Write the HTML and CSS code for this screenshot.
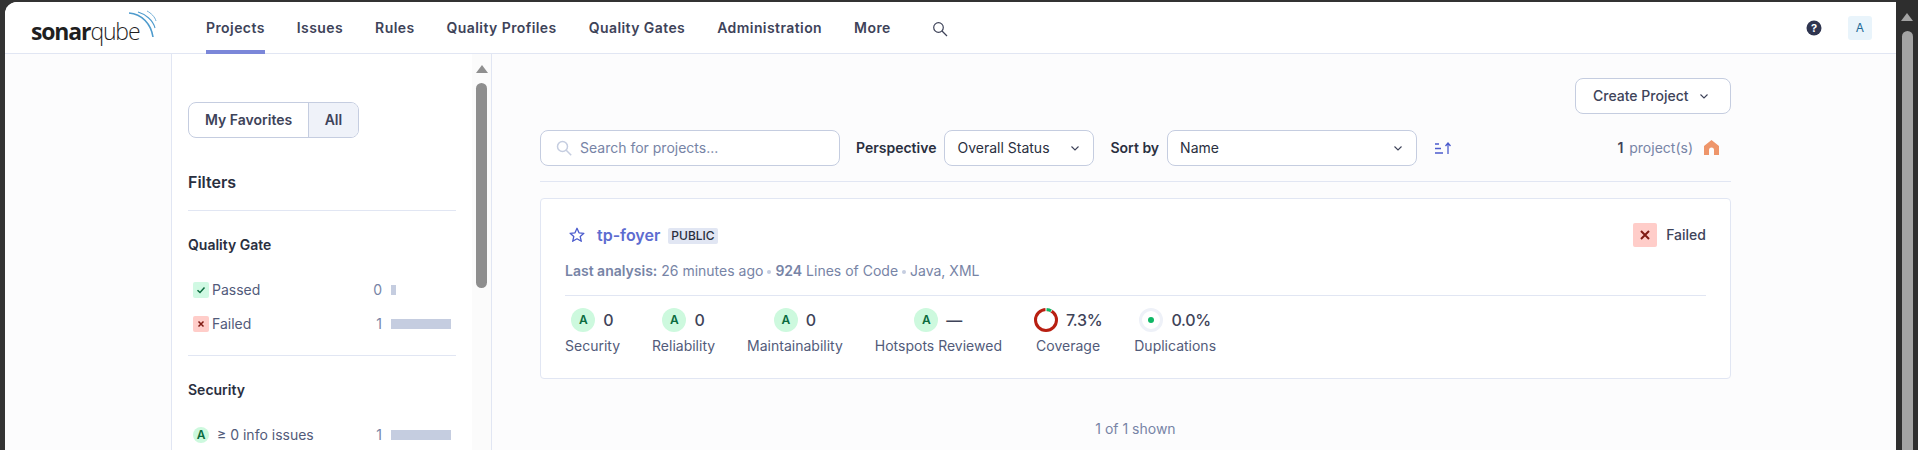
FILE: index.html
```html
<!DOCTYPE html>
<html lang="en">
<head>
<meta charset="utf-8">
<title>Projects - SonarQube</title>
<link rel="stylesheet" href="styles.css">
</head>
<body>
<div class="window">
  <header class="topbar">
    <a class="logo">
      <span class="logo-text"><b>sonar</b><span class="logo-light">qube</span></span>
      <svg class="logo-arcs" width="30" height="30" viewBox="0 0 30 30" fill="none" stroke="#4e9bcd">
        <path d="M1 3C14 4 23 14 25 27" stroke-width="1.600"/>
        <path d="M10 2C17 4 25 10 27 18" stroke-width="1.100"/>
        <path d="M19 1C23 3 27 7 28 11" stroke-width=".8"/>
      </svg>
    </a>
    <nav class="nav">
      <a class="nav-item active">Projects</a>
      <a class="nav-item">Issues</a>
      <a class="nav-item">Rules</a>
      <a class="nav-item">Quality Profiles</a>
      <a class="nav-item">Quality Gates</a>
      <a class="nav-item">Administration</a>
      <a class="nav-item">More</a>
      <svg class="nav-search" width="16" height="16" viewBox="0 0 16 16" fill="none" stroke="#3e4359" stroke-width="1.200"><circle cx="6.500" cy="6.500" r="4.800"/><path d="M10 10l5 5"/></svg>
    </nav>
    <div class="top-right">
      <svg width="16" height="16" viewBox="0 0 16 16"><circle cx="8" cy="8" r="7.500" fill="#2f3550"/><text class="help-mark" x="8" y="11.500" text-anchor="middle">?</text></svg>
      <span class="avatar">A</span>
    </div>
  </header>

  <div class="body-row">
    <aside class="sidebar">
      <div class="side-content">
        <div class="toggle">
          <span class="toggle-item">My Favorites</span>
          <span class="toggle-item selected">All</span>
        </div>
        <h2 class="filters-title">Filters</h2>
        <section class="facet">
          <h3 class="facet-title">Quality Gate</h3>
          <div class="facet-row">
            <span class="qg-mini pass"><svg width="10" height="10" viewBox="0 0 10 10" fill="none" stroke="#0a6b3e" stroke-width="1.500"><path d="M1.500 5.200l2.500 2.300 4.500-5"/></svg></span>
            <span class="facet-label">Passed</span>
            <span class="facet-count">0</span>
            <span class="facet-bar"><i class="bar-fill" style="width:5px"></i></span>
          </div>
          <div class="facet-row">
            <span class="qg-mini fail"><svg width="10" height="10" viewBox="0 0 10 10" fill="none" stroke="#801b14" stroke-width="1.500"><path d="M2.500 2.500l5 5M7.500 2.500l-5 5"/></svg></span>
            <span class="facet-label">Failed</span>
            <span class="facet-count">1</span>
            <span class="facet-bar"><i class="bar-fill" style="width:60px"></i></span>
          </div>
        </section>
        <section class="facet">
          <h3 class="facet-title">Security</h3>
          <div class="facet-row">
            <span class="rating-mini">A</span>
            <span class="facet-label spaced">≥ 0 info issues</span>
            <span class="facet-count">1</span>
            <span class="facet-bar"><i class="bar-fill" style="width:60px"></i></span>
          </div>
        </section>
      </div>
      <div class="side-scroll">
        <span class="arrow-up"></span>
        <span class="side-thumb"></span>
      </div>
    </aside>

    <main class="main">
      <div class="actions">
        <button class="btn">Create Project
          <svg width="12" height="12" viewBox="0 0 12 12" fill="none" stroke="#3e4359" stroke-width="1.100"><path d="M2.500 4.500L6 8l3.500-3.500"/></svg>
        </button>
      </div>
      <div class="filters">
        <label class="search">
          <svg width="16" height="16" viewBox="0 0 16 16" fill="none" stroke="#c5cde0" stroke-width="1.500"><circle cx="6.500" cy="6.500" r="5"/><path d="M10.200 10.200l5 5"/></svg>
          <span class="placeholder">Search for projects...</span>
        </label>
        <span class="field-label">Perspective</span>
        <span class="select perspective">Overall Status
          <svg width="12" height="12" viewBox="0 0 12 12" fill="none" stroke="#3e4359" stroke-width="1.100"><path d="M2.500 4.500L6 8l3.500-3.500"/></svg>
        </span>
        <span class="field-label sort-label">Sort by</span>
        <span class="select sort">Name
          <svg width="12" height="12" viewBox="0 0 12 12" fill="none" stroke="#3e4359" stroke-width="1.100"><path d="M2.500 4.500L6 8l3.500-3.500"/></svg>
        </span>
        <svg class="sort-icon" width="16" height="12" viewBox="0 0 16 12" fill="none" stroke="#4b5bcd" stroke-width="1.300"><path d="M0 2h4M0 6.500h6M0 11h8M13 12V1.500M10.500 4L13 1l2.500 3"/></svg>
        <span class="count"><b>1</b> project(s)</span>
        <svg class="home" width="15" height="15" viewBox="0 0 15 15"><path fill="#ee956a" d="M7.500 0L15 6v8.500a.5.500 0 0 1-.5.500H10V10a2.500 2.500 0 0 0-5 0v5H.5a.5.500 0 0 1-.5-.5V6z"/></svg>
      </div>
      <div class="card">
        <div class="card-head">
          <svg class="star" width="16" height="16" viewBox="0 0 16 16" fill="none" stroke="#4b5bcd" stroke-width="1.300" stroke-linejoin="round"><path d="M8 1.300l2 4.500 4.900.5-3.700 3.200 1.100 4.800L8 11.800l-4.300 2.500 1.100-4.800L1.100 6.300 6 5.800z"/></svg>
          <a class="project-name">tp-foyer</a>
          <span class="badge">PUBLIC</span>
          <span class="status-icon"><svg width="14" height="14" viewBox="0 0 14 14" fill="none" stroke="#801b14" stroke-width="2"><path d="M3 3l8 8M11 3l-8 8"/></svg></span>
          <span class="status-text">Failed</span>
        </div>
        <div class="meta">
          <b>Last analysis:</b> 26 minutes ago<i class="dot"></i><b>924</b> Lines of Code<i class="dot"></i>Java, XML
        </div>
        <div class="measures">
          <div class="measure">
            <div class="value"><span class="rating">A</span><span class="num">0</span></div>
            <span class="measure-label">Security</span>
          </div>
          <div class="measure">
            <div class="value"><span class="rating">A</span><span class="num">0</span></div>
            <span class="measure-label">Reliability</span>
          </div>
          <div class="measure">
            <div class="value"><span class="rating">A</span><span class="num">0</span></div>
            <span class="measure-label">Maintainability</span>
          </div>
          <div class="measure">
            <div class="value"><span class="rating">A</span><span class="num">—</span></div>
            <span class="measure-label">Hotspots Reviewed</span>
          </div>
          <div class="measure">
            <div class="value">
              <svg width="24" height="24" viewBox="0 0 24 24" fill="none" stroke-width="3"><circle cx="12" cy="12" r="10.500" stroke="#b81f11"/><path d="M11.450 1.510A10.500 10.500 0 0 1 17.720 3.190" stroke="#fff" stroke-width="3.400"/><path d="M12.550 1.510A10.500 10.500 0 0 1 17.090 2.820" stroke="#0fb765"/></svg>
              <span class="num pct">7.3%</span>
            </div>
            <span class="measure-label">Coverage</span>
          </div>
          <div class="measure">
            <div class="value">
              <svg width="24" height="24" viewBox="0 0 24 24" fill="none"><circle cx="12" cy="12" r="10.500" stroke="#eef1f8" stroke-width="3"/><circle cx="12" cy="12" r="3" fill="#0fb765"/></svg>
              <span class="num pct">0.0%</span>
            </div>
            <span class="measure-label">Duplications</span>
          </div>
        </div>
      </div>
      <div class="shown">1 of 1 shown</div>
    </main>
  </div>
</div>
<div class="page-scroll">
  <span class="arrow-up light"></span>
  <span class="page-thumb"></span>
</div>
</body>
</html>
```

FILE: styles.css
```css
* { box-sizing: border-box; }
html, body { margin: 0; height: 450px; overflow: hidden; }
body {
  display: flex;
  background: #333;
  font-family: Inter, "Noto Sans", sans-serif;
  font-size: 14px;
  line-height: 20px;
  color: #3e4359;
}
h2, h3 { margin: 0; }
.window {
  width: 1891px;
  margin: 2px 0 0 5px;
  height: 448px;
  background: #fcfcfd;
  border-radius: 12px 0 0 0;
  overflow: hidden;
  display: flex;
  flex-direction: column;
}
.topbar {
  height: 52px;
  flex: none;
  display: flex;
  align-items: center;
  background: #fff;
  border-bottom: 1px solid #e1e6f3;
  padding-left: 26px;
}
.logo { display: flex; width: 175px; height: 52px; align-items: flex-start; }
.logo-text {
  width: 107px;
  margin-top: 13px;
  font-family: "Open Sans", sans-serif;
  font-size: 23px;
  line-height: 32px;
  letter-spacing: -1.15px;
  color: #1f1f1f;
  white-space: nowrap;
}
.logo-text b { font-weight: 700; }
.logo-light { font-weight: 300; }
.logo-arcs { margin: 8px 0 0 -10px; flex: none; }
.nav { display: flex; align-items: center; gap: 32px; height: 52px; }
.nav-item {
  height: 52px;
  padding-top: 16px;
  font-weight: 600;
  letter-spacing: .42px;
  color: #3e4359;
  white-space: nowrap;
}
.nav-item.active { border-bottom: 4px solid #7b87d9; }
.nav-search { margin: 2px 0 0 9px; }
.top-right { margin-left: auto; display: flex; align-items: center; gap: 26px; padding-right: 24px; }
.help-mark { font-size: 11px; font-weight: 700; fill: #fff; }
.avatar {
  width: 24px; height: 24px;
  display: flex; align-items: center; justify-content: center;
  border-radius: 3px;
  background: #e9f4fb;
  color: #236a97;
  font-size: 12px;
}

.body-row { flex: 1; display: flex; min-height: 0; padding-left: 166px; }
.sidebar {
  width: 321px;
  flex: none;
  display: flex;
  background: #fff;
  border-left: 1px solid #e1e6f3;
  border-right: 1px solid #e1e6f3;
}
.side-content { width: 300px; flex: none; padding: 48px 0 0 16px; }
.side-scroll {
  width: 19px;
  flex: none;
  display: flex;
  flex-direction: column;
  align-items: center;
  background: #fbfbfb;
  padding-top: 11px;
}
.arrow-up {
  width: 0; height: 0;
  border-left: 6px solid transparent;
  border-right: 6px solid transparent;
  border-bottom: 8px solid #8f8f8f;
}
.arrow-up.light { border-bottom-color: #a3a3a3; }
.side-thumb { width: 11px; height: 205px; margin-top: 10px; background: #8e8e8e; border-radius: 6px; }

.toggle {
  display: inline-flex;
  height: 36px;
  border: 1px solid #c5cde0;
  border-radius: 8px;
  overflow: hidden;
  font-weight: 600;
}
.toggle-item { padding: 7px 16px; }
.toggle-item.selected { padding: 7px 15.5px; background: #eff2f9; border-left: 1px solid #c5cde0; }
.filters-title {
  margin-top: 32px;
  height: 41px;
  width: 268px;
  font-size: 16px;
  line-height: 24px;
  font-weight: 600;
  color: #2a2f40;
  border-bottom: 1px solid #e1e6f3;
}
.facet { width: 268px; padding-top: 24px; height: 145px; border-bottom: 1px solid #e1e6f3; }
.facet + .facet { border-bottom: 0; }
.facet-title { font-size: 14px; line-height: 20px; font-weight: 600; color: #2a2f40; margin-bottom: 18px; }
.facet-row { display: flex; align-items: center; height: 34px; padding-left: 5px; }
.qg-mini, .rating-mini {
  width: 16px; height: 16px;
  flex: none;
  display: flex; align-items: center; justify-content: center;
  border-radius: 2px;
}
.pass { background: #d0f9e3; }
.fail { background: #ffcdc9; }
.rating-mini { border-radius: 50%; background: #cdf9de; color: #0a6b3e; font-size: 12px; font-weight: 600; }
.facet-label { margin-left: 3px; color: #525b7a; }
.facet-label.spaced { margin-left: 8px; }
.facet-count { margin-left: auto; color: #7784a6; }
.facet-bar { width: 60px; height: 10px; margin: 0 5px 0 9px; display: flex; }
.bar-fill { display: block; height: 10px; background: #c5cde0; }

.main { flex: 1; padding: 24px 165px 0 48px; }
.actions { display: flex; justify-content: flex-end; }
.btn {
  display: flex; align-items: center; gap: 9px;
  height: 36px;
  width: 156px;
  padding: 0 0 0 17px;
  background: #fff;
  border: 1px solid #c5cde0;
  border-radius: 8px;
  font: 500 14px/20px Inter, sans-serif;
  color: #3e4359;
}
.filters {
  display: flex;
  align-items: flex-start;
  height: 52px;
  margin-top: 16px;
  border-bottom: 1px solid #e1e6f3;
}
.filters > svg, .filters > span:not(.select) { align-self: flex-start; margin-top: 8px; }
.search, .select {
  height: 36px;
  display: flex;
  align-items: center;
  background: #fff;
  border: 1px solid #c5cde0;
  border-radius: 8px;
}
.search { width: 300px; padding-left: 15px; gap: 8px; }
.placeholder { color: #7784a6; }
.field-label { margin-left: 16px; margin-right: 8px; font-weight: 600; color: #2a2f40; white-space: nowrap; }
.select { padding: 0 12px; justify-content: space-between; color: #2a2f40; }
.perspective { width: 150px; }
.sort { width: 250px; }
.filters > .sort-icon { margin-left: 18px; margin-top: 12px; }
.count { margin-left: auto; color: #7784a6; word-spacing: 2px; }
.count b { font-weight: 600; color: #3e4359; }
.filters > .home { margin: 10px 12px 0 11px; }

.card {
  height: 181px;
  margin-top: 16px;
  padding: 24px;
  background: #fff;
  border: 1px solid #e1e6f3;
  border-radius: 4px;
}
.card-head { display: flex; align-items: center; height: 24px; }
.star { margin-left: 4px; }
.project-name { margin-left: 12px; font-size: 16px; line-height: 24px; font-weight: 600; color: #5d6cd0; }
.badge {
  margin: 2px 0 0 8px;
  padding: 0 3px;
  height: 16px;
  border-radius: 2px;
  background: #e1e6f3;
  color: #2a2f40;
  font-size: 12px;
  line-height: 16px;
  font-weight: 500;
}
.status-icon {
  margin-left: auto;
  width: 24px; height: 24px;
  display: flex; align-items: center; justify-content: center;
  border-radius: 2px;
  background: #ffcdc9;
}
.status-text { margin-left: 9px; font-weight: 500; color: #3e4359; }
.meta { margin-top: 14px; height: 35px; color: #7784a6; border-bottom: 1px solid #e1e6f3; white-space: nowrap; }
.meta b { font-weight: 600; }
.dot { display: inline-block; width: 4px; height: 4px; margin: 0 4px 2px 4px; border-radius: 50%; background: #c5cde0; }
.measures { display: flex; gap: 32px; padding-top: 12px; }
.measure { display: flex; flex-direction: column; align-items: center; }
.value { display: flex; align-items: center; gap: 8px; height: 24px; }
.rating {
  width: 24px; height: 24px;
  display: flex; align-items: center; justify-content: center;
  border-radius: 50%;
  background: #cdf9de;
  color: #0a6b3e;
  font-size: 12px;
  font-weight: 600;
}
.num { font-size: 16px; font-weight: 500; color: #3e4359; }
.pct { letter-spacing: -.3px; }
.measure-label { margin-top: 4px; color: #525b7a; white-space: nowrap; }
.shown { margin-top: 40px; text-align: center; color: #7784a6; }

.page-scroll {
  flex: 1;
  display: flex;
  flex-direction: column;
  align-items: center;
  padding-top: 13px;
  background: #2e2e2e;
}
.page-thumb { width: 11px; flex: 1; margin-top: 10px; background: #a3a3a3; border-radius: 6px 6px 0 0; }
```
